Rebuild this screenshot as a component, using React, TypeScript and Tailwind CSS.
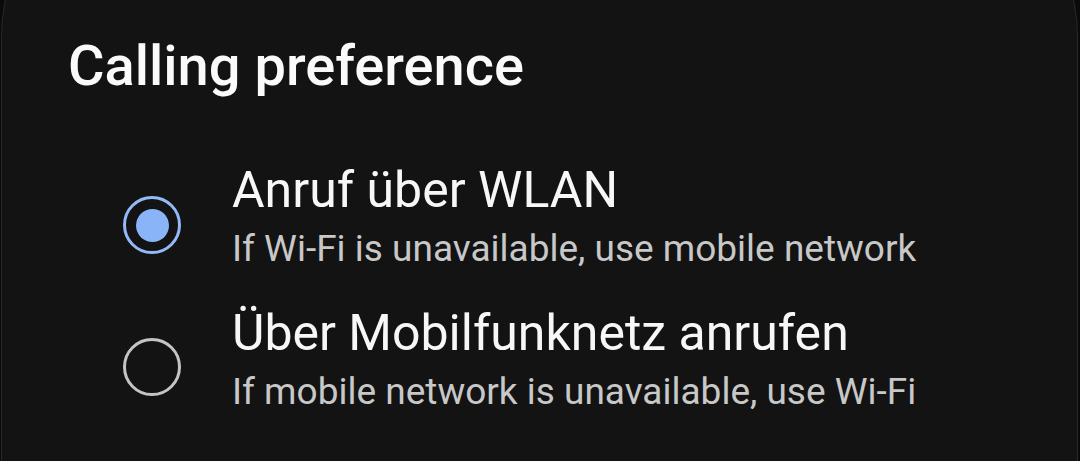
type Option = {
  id: string;
  title: string;
  subtitle: string;
};

const options: Option[] = [
  {
    id: "wifi",
    title: "Anruf über WLAN",
    subtitle: "If Wi-Fi is unavailable, use mobile network",
  },
  {
    id: "mobile",
    title: "Über Mobilfunknetz anrufen",
    subtitle: "If mobile network is unavailable, use Wi-Fi",
  },
];

function Radio({ checked }: { checked: boolean }) {
  if (checked)
    return (
      <span className="mt-[35px] flex h-[58px] w-[58px] shrink-0 items-center justify-center rounded-full border-[3px] border-[#93b9f6]">
        <span className="h-[33px] w-[33px] rounded-full bg-[#8ab4f8]" />
      </span>
    );
  return (
    <span className="mt-[34px] h-[58px] w-[58px] shrink-0 rounded-full border-[3px] border-[#c4c4c4]" />
  );
}

export default function App() {
  const selected = "wifi";

  return (
    <div
      className="h-[461px] w-[1080px] overflow-hidden bg-[#0a0a0a]"
      style={{ fontFamily: "Roboto, 'Noto Sans', sans-serif" }}
    >
      <div className="-mt-[120px] ml-[1px] mr-[2px] h-[600px] rounded-t-[155px] border-x border-t border-[#282828] bg-[#131313] pt-[120px]">
        <h2 className="pt-[37px] pl-[66px] text-[56px] font-medium leading-none text-[#fafafa]">
          Calling preference
        </h2>
        <ul className="mt-[67px] flex flex-col gap-[34px] pl-[121px]">
          {options.map((option) => (
            <li key={option.id} className="flex items-start gap-[51px]">
              <Radio checked={option.id === selected} />
              <div className="flex flex-col">
                <span className="text-[50px] leading-[58px] text-[#f7f7f7]">
                  {option.title}
                </span>
                <span className="mt-[9px] text-[37px] leading-[42px] text-[#c8c8c8]">
                  {option.subtitle}
                </span>
              </div>
            </li>
          ))}
        </ul>
      </div>
    </div>
  );
}
